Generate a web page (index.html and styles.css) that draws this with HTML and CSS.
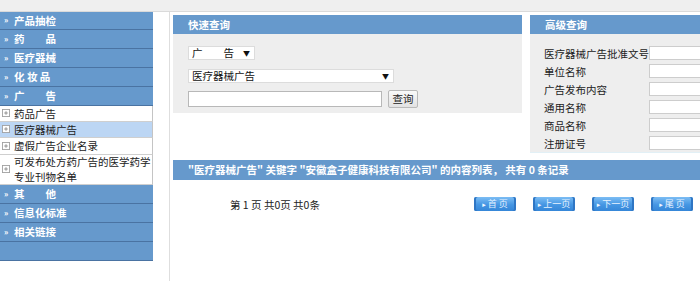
FILE: index.html
```html
<!DOCTYPE html>
<html lang="zh-CN">
<head>
<meta charset="utf-8">
<title>广告查询</title>
<link rel="stylesheet" href="styles.css">
</head>
<body>
<div class="page">
  <div class="topbar"></div>
  <div class="layout">
    <nav class="sidebar">
      <div class="cat first"><span class="arr">»</span>产品抽检</div>
      <div class="cat"><span class="arr">»</span>药　　品</div>
      <div class="cat"><span class="arr">»</span>医疗器械</div>
      <div class="cat"><span class="arr">»</span>化 妆 品</div>
      <div class="cat"><span class="arr">»</span>广　　告</div>
      <ul class="sub">
        <li><svg class="plus" viewBox="0 0 9 9" width="9" height="9"><rect x="0.5" y="0.5" width="8" height="8" fill="#fff" stroke="#a0a0a0"/><path d="M2.5 4.5h4M4.5 2.5v4" stroke="#888" stroke-width="1"/></svg><span>药品广告</span></li>
        <li class="active"><svg class="plus" viewBox="0 0 9 9" width="9" height="9"><rect x="0.5" y="0.5" width="8" height="8" fill="#fff" stroke="#a0a0a0"/><path d="M2.5 4.5h4M4.5 2.5v4" stroke="#888" stroke-width="1"/></svg><span>医疗器械广告</span></li>
        <li><svg class="plus" viewBox="0 0 9 9" width="9" height="9"><rect x="0.5" y="0.5" width="8" height="8" fill="#fff" stroke="#a0a0a0"/><path d="M2.5 4.5h4M4.5 2.5v4" stroke="#888" stroke-width="1"/></svg><span>虚假广告企业名录</span></li>
        <li class="tall"><svg class="plus" viewBox="0 0 9 9" width="9" height="9"><rect x="0.5" y="0.5" width="8" height="8" fill="#fff" stroke="#a0a0a0"/><path d="M2.5 4.5h4M4.5 2.5v4" stroke="#888" stroke-width="1"/></svg><span>可发布处方药广告的医学药学专业刊物名单</span></li>
      </ul>
      <div class="cat"><span class="arr">»</span>其　　他</div>
      <div class="cat"><span class="arr">»</span>信息化标准</div>
      <div class="cat"><span class="arr">»</span>相关链接</div>
      <div class="cat empty"></div>
    </nav>
    <main class="main">
      <div class="search-row">
        <section class="panel quick">
          <div class="panel-head">快速查询</div>
          <div class="panel-body">
            <div class="select s1"><span>广　　告</span><span class="caret">▼</span></div>
            <div class="select s2"><span>医疗器械广告</span><span class="caret">▼</span></div>
            <div class="search-line">
              <input class="text-input" type="text">
              <button class="btn" type="button">查询</button>
            </div>
          </div>
        </section>
        <section class="panel adv">
          <div class="panel-head">高级查询</div>
          <div class="panel-body">
            <div class="field"><label>医疗器械广告批准文号</label><input type="text"></div>
            <div class="field"><label>单位名称</label><input type="text"></div>
            <div class="field"><label>广告发布内容</label><input type="text"></div>
            <div class="field"><label>通用名称</label><input type="text"></div>
            <div class="field"><label>商品名称</label><input type="text"></div>
            <div class="field"><label>注册证号</label><input type="text"></div>
          </div>
        </section>
      </div>
      <div class="result-bar">"医疗器械广告" 关键字 "安徽盒子健康科技有限公司" 的内容列表， 共有 0 条记录</div>
      <div class="pager">
        <span class="pager-info">第 1 页 共0页 共0条</span>
        <div class="pager-btns">
          <span class="pbtn"><span class="tri">▸</span>首 页</span>
          <span class="pbtn"><span class="tri">▸</span>上一页</span>
          <span class="pbtn"><span class="tri">▸</span>下一页</span>
          <span class="pbtn"><span class="tri">▸</span>尾 页</span>
        </div>
      </div>
    </main>
  </div>
</div>
</body>
</html>
```
FILE: styles.css
```css
html, body {
  margin: 0;
  padding: 0;
  background: #fff;
  overflow: hidden;
}
body {
  font-family: "Noto Sans CJK SC", "DejaVu Sans", sans-serif;
  font-size: 10.5px;
  color: #222;
}
.page {
  width: 700px;
  overflow: hidden;
}
.topbar {
  height: 11px;
  background: #efefef;
  border-bottom: 1px solid #dadada;
}
.layout {
  display: flex;
  min-height: 269px;
}
.sidebar {
  width: 153px;
  flex: none;
  align-self: flex-start;
  margin-right: 16px;
}
.cat {
  display: flex;
  align-items: center;
  height: 18px;
  background: #6699cc;
  border-bottom: 1px solid #4a73a2;
  color: #fff;
  font-weight: bold;
  padding-left: 4px;
  white-space: nowrap;
}
.cat.first {
  height: 16.5px;
}
.cat .arr {
  display: inline-block;
  width: 10px;
  font-size: 8px;
  line-height: 8px;
}
.sub {
  list-style: none;
  margin: 0;
  padding: 0;
}
.sub li {
  display: flex;
  align-items: center;
  height: 15px;
  border-bottom: 1px solid #cfcfcf;
  border-right: 1px solid #c4c4c4;
  padding-left: 2px;
  background: #fff;
  color: #222;
}
.sub li:nth-child(3) {
  height: 16px;
}
.sub li.active {
  background: #bcd6f4;
}
.sub li.tall {
  height: 29px;
  line-height: 15px;
}
.sub .plus {
  flex: none;
  width: 8px;
  height: 8px;
  margin-right: 4px;
}
.main {
  flex: 1;
  min-width: 0;
  overflow: hidden;
  border-left: 1px solid #dedede;
  padding: 3px 0 0 3px;
}
.search-row {
  display: flex;
  align-items: flex-start;
  gap: 8px;
}
.panel-head {
  height: 19px;
  line-height: 19px;
  background: #6699cc;
  color: #fff;
  font-weight: bold;
  padding-left: 15px;
}
.quick {
  width: 349px;
  flex: none;
}
.quick .panel-body {
  background: #eeeeee;
  height: 79px;
  box-sizing: border-box;
  padding: 12px 0 0 15px;
}
.select {
  display: flex;
  justify-content: space-between;
  align-items: center;
  box-sizing: border-box;
  height: 14px;
  background: #fff;
  border: 1px solid #dcdcdc;
  padding: 0 4px 0 3px;
  line-height: 12px;
  color: #111;
}
.select.s1 {
  width: 67px;
}
.select.s2 {
  width: 206px;
  margin-top: 9px;
}
.caret {
  font-size: 7px;
  color: #111;
}
.search-line {
  display: flex;
  align-items: center;
  gap: 6px;
  margin-top: 7px;
}
.text-input {
  width: 194px;
  height: 16px;
  box-sizing: border-box;
  border: 1px solid #b8b8b8;
  background: #fff;
  margin: 0;
  padding: 0;
}
.btn {
  width: 30px;
  height: 18px;
  box-sizing: border-box;
  padding: 0;
  margin: 0;
  border: 1px solid #b9b9b9;
  border-radius: 2px;
  background: linear-gradient(#fafafa, #e2e2e2);
  font-family: "Noto Sans CJK SC", sans-serif;
  font-size: 10.5px;
  color: #222;
  line-height: 16px;
}
.adv {
  flex: 1;
  min-width: 0;
}
.adv .panel-body {
  background: #eeeeee;
  height: 119px;
  box-sizing: border-box;
  padding: 10px 0 0 14px;
  border-bottom: 1px solid #e2f0f6;
}
.field {
  display: flex;
  align-items: center;
  height: 18px;
}
.field label {
  width: 105px;
  flex: none;
  white-space: nowrap;
  color: #222;
}
.field input {
  flex: 1;
  min-width: 0;
  height: 14px;
  box-sizing: border-box;
  border: 1px solid #cdcdcd;
  border-right: none;
  background: #fff;
  margin: 0;
  padding: 0;
}
.result-bar {
  box-sizing: border-box;
  margin-top: 7px;
  height: 20px;
  line-height: 20px;
  background: #6699cc;
  color: #fff;
  font-weight: bold;
  padding-left: 15px;
  white-space: nowrap;
  overflow: hidden;
}
.pager {
  display: flex;
  align-items: center;
  margin-top: 17px;
  padding-left: 57px;
  height: 14px;
}
.pager-info {
  width: 244px;
  flex: none;
  color: #222;
}
.pager-btns {
  display: flex;
  gap: 17px;
}
.pbtn {
  display: flex;
  align-items: center;
  justify-content: center;
  width: 42px;
  height: 14px;
  box-sizing: border-box;
  border-radius: 2px;
  background: linear-gradient(#7cbdf4, #4596e3 55%, #3586d8);
  box-shadow: inset 2px 0 0 #2f76c4, inset -2px 0 0 #2f76c4;
  color: #e6f2ff;
  font-size: 9px;
  line-height: 14px;
  white-space: nowrap;
}
.pbtn .tri {
  font-size: 7px;
  margin-right: 2px;
  color: #f0f8ff;
}
```
